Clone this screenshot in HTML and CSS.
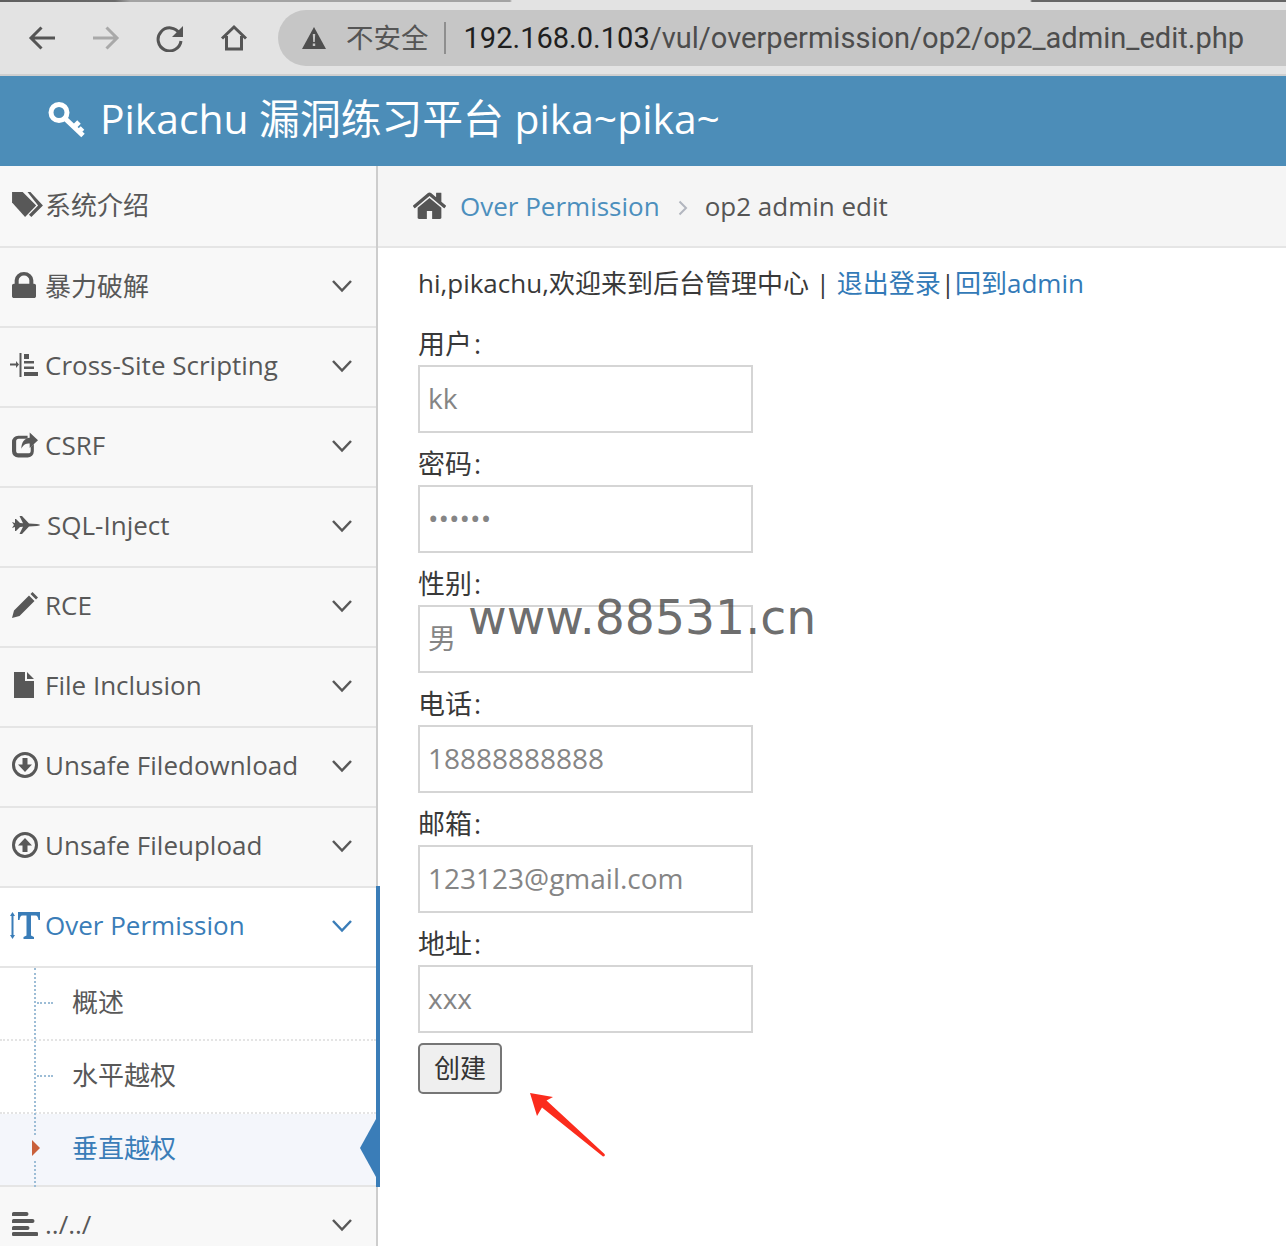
FILE: index.html
```html
<!DOCTYPE html>
<html lang="zh">
<head>
<meta charset="utf-8">
<title>op2 admin edit</title>
<link rel="stylesheet" href="styles.css">
</head>
<body>
<div class="app">
  <div class="tabstrip"></div>
  <div class="toolbar">
    <svg class="tb-ico back" viewBox="0 0 28 28"><path d="M27 14H3M13.500 3.500L3 14l10.500 10.500"/></svg>
    <svg class="tb-ico fwd" viewBox="0 0 28 28"><path d="M1 14h24M14.500 3.500L25 14 14.500 24.500"/></svg>
    <svg class="tb-ico reload" viewBox="0 0 28 28"><path d="M23.500 9.500A11.500 11.500 0 1 0 25 17"/><path class="solid" d="M27 2v11H16z"/></svg>
    <svg class="tb-ico homeb" viewBox="0 0 28 28"><path d="M2 14.500L14 3l12 11.500M6.500 12v13h15V12"/></svg>
    <div class="omnibox">
      <svg class="warn" viewBox="0 0 24 22"><path d="M12 0L24 22H0z"/><path class="warn-mark" d="M10.800 7h2.400l-.4 8h-1.600zM10.800 16.500h2.400v2.500h-2.400z"/></svg>
      <span class="insecure">不安全</span>
      <span class="omni-sep"></span>
      <span class="url"><b class="host">192.168.0.103</b>/vul/overpermission/op2/op2_admin_edit.php</span>
    </div>
  </div>

  <header class="brand">
    <svg class="key" viewBox="0 0 38 36"><circle cx="11" cy="11" r="8"/><path d="M17 17l18 17M26 25.500l5-5M31 30l3.500-3.500"/></svg>
    <span class="brand-text">Pikachu 漏洞练习平台 pika~pika~</span>
  </header>

  <div class="layout">
    <nav class="sidebar">
      <a class="item first">
        <svg class="ico tags" viewBox="0 0 34 28"><path d="M1 1h11l14 14-11.500 12L1 12z"/><path d="M17 1h3l13 14-12 12-2.500-2.500L28 15z"/><circle class="hole" cx="6" cy="6" r="2.200"/></svg>
        <span>系统介绍</span>
      </a>
      <a class="item">
        <svg class="ico lock" viewBox="320 128 1152 1408" preserveAspectRatio="none"><path d="M640 768h512v-192q0-106-75-181t-181-75-181 75-75 181v192zm832 96v576q0 40-28 68t-68 28h-960q-40 0-68-28t-28-68v-576q0-40 28-68t68-28h32v-192q0-184 132-316t316-132 316 132 132 316v192h32q40 0 68 28t28 68z"/></svg>
        <span>暴力破解</span>
        <svg class="chev" viewBox="0 0 20 14"><path d="M1 2l9 9.500L19 2"/></svg>
      </a>
      <a class="item">
        <svg class="ico indent" viewBox="0 0 28 24"><path d="M0 10.500h6V8l3 3.500-3 3.500v-2.500H0zM9.500 0h2v24h-2zM14 1h5v5h-5zM14 8h10v2.500H14zM14 13.500h10V16H14zM14 19h14v4H14z"/></svg>
        <span>Cross-Site Scripting</span>
        <svg class="chev" viewBox="0 0 20 14"><path d="M1 2l9 9.500L19 2"/></svg>
      </a>
      <a class="item">
        <svg class="ico" viewBox="0 0 25 24"><path d="M6 3h9v3H6.500A2.500 2.500 0 0 0 4 8.500v9A2.500 2.500 0 0 0 6.500 20h9a2.500 2.500 0 0 0 2.500-2.500V14l3-3v7a6 6 0 0 1-6 6H6a6 6 0 0 1-6-6V9a6 6 0 0 1 6-6z"/><path d="M17 0l8 7.500-8 7.500v-4.500c-4 0-6 1-8 5 0-6 3-10 8-10.500z"/></svg>
        <span>CSRF</span>
        <svg class="chev" viewBox="0 0 20 14"><path d="M1 2l9 9.500L19 2"/></svg>
      </a>
      <a class="item sql">
        <svg class="ico plane" viewBox="0 0 28 18"><path d="M0 6l3 1V3h1l4 4 3 .3L7.500 0H10l7 7.500 8 .5c2 .3 3 .7 3 1s-1 .7-3 1l-8 .5L10 18H7.500l3.500-7.300-3 .3-4 4H3v-4l-3 1 2-3z"/></svg>
        <span>SQL-Inject</span>
        <svg class="chev" viewBox="0 0 20 14"><path d="M1 2l9 9.500L19 2"/></svg>
      </a>
      <a class="item">
        <svg class="ico" viewBox="0 0 26 26"><path d="M0 26l2-7.500L17 3.500 22.500 9 7.500 24zM18.500 2L20.500 0 26 5.500 24 7.500z"/></svg>
        <span>RCE</span>
        <svg class="chev" viewBox="0 0 20 14"><path d="M1 2l9 9.500L19 2"/></svg>
      </a>
      <a class="item">
        <svg class="ico file" viewBox="0 0 20 26"><path d="M0 0h11v9h9v17H0zM13 0l7 7h-7z"/></svg>
        <span>File Inclusion</span>
        <svg class="chev" viewBox="0 0 20 14"><path d="M1 2l9 9.500L19 2"/></svg>
      </a>
      <a class="item">
        <svg class="ico" viewBox="0 0 26 26"><path fill-rule="evenodd" d="M13 0a13 13 0 1 1 0 26 13 13 0 0 1 0-26zm0 3a10 10 0 1 0 0 20 10 10 0 0 0 0-20z"/><path d="M10.500 6h5v6.500H20L13 20l-7-7.500h4.500z"/></svg>
        <span>Unsafe Filedownload</span>
        <svg class="chev" viewBox="0 0 20 14"><path d="M1 2l9 9.500L19 2"/></svg>
      </a>
      <a class="item">
        <svg class="ico" viewBox="0 0 26 26"><path fill-rule="evenodd" d="M13 0a13 13 0 1 1 0 26 13 13 0 0 1 0-26zm0 3a10 10 0 1 0 0 20 10 10 0 0 0 0-20z"/><path d="M10.500 20h5v-6.500H20L13 6l-7 7.500h4.500z"/></svg>
        <span>Unsafe Fileupload</span>
        <svg class="chev" viewBox="0 0 20 14"><path d="M1 2l9 9.500L19 2"/></svg>
      </a>

      <div class="open-group">
        <a class="item open">
          <svg class="ico textheight" viewBox="0 0 30 27"><path d="M2.500 0L5 4H3.500v19H5l-2.500 4L0 23h1.500V4H0zM8 0h22v8h-1.500c-.5-3-1-4.500-3-4.500H21v20l3 1.500v2H13.500v-2l3-1.500v-20h-4c-2 0-2.500 1.500-3 4.500H8z"/></svg>
          <span>Over Permission</span>
          <svg class="chev" viewBox="0 0 20 14"><path d="M1 2l9 9.500L19 2"/></svg>
        </a>
        <div class="submenu">
          <a class="sub"><span class="tick"></span>概述</a>
          <a class="sub"><span class="tick"></span>水平越权</a>
          <a class="sub current"><span class="marker"></span>垂直越权<span class="notch"></span></a>
        </div>
      </div>

      <a class="item last">
        <svg class="ico" viewBox="0 0 26 24"><path d="M0 1.500A1.500 1.500 0 0 1 1.500 0h13a1.500 1.500 0 0 1 0 4h-13A1.500 1.500 0 0 1 0 1.500zM0 8.500A1.500 1.500 0 0 1 1.500 7h19a1.500 1.500 0 0 1 0 4h-19A1.500 1.500 0 0 1 0 8.500zM0 15.500A1.500 1.500 0 0 1 1.500 14h14a1.500 1.500 0 0 1 0 4h-14A1.500 1.500 0 0 1 0 15.500zM0 22a1.500 1.500 0 0 1 1.500-2h23a1.500 1.500 0 0 1 0 4h-23A1.500 1.500 0 0 1 0 22z"/></svg>
        <span>../../</span>
        <svg class="chev" viewBox="0 0 20 14"><path d="M1 2l9 9.500L19 2"/></svg>
      </a>
    </nav>

    <main class="main">
      <div class="crumbs">
        <svg class="crumb-home" viewBox="0 0 1696 1408"><path transform="translate(-48 -128)" d="M1472 992v480q0 26-19 45t-45 19h-384v-384h-256v384h-384q-26 0-45-19t-19-45v-480q0-1 .5-3t.5-3l575-474 575 474q1 2 1 6zm223-69l-62 74q-8 9-21 11h-3q-13 0-21-7l-692-577-692 577q-12 8-24 7-13-2-21-11l-62-74q-8-10-7-23.500t11-21.500l719-599q32-26 76-26t76 26l244 204v-195q0-14 9-23t23-9h192q14 0 23 9t9 23v408l219 182q10 8 11 21.500t-7 23.500z"/></svg>
        <a class="crumb-link">Over Permission</a>
        <svg class="crumb-sep" viewBox="0 0 10 16"><path d="M1.500 1.500L8 8l-6.500 6.500"/></svg>
        <span class="crumb-now">op2 admin edit</span>
      </div>
      <div class="content">
        <p class="welcome">hi,pikachu,欢迎来到后台管理中心 | <a>退出登录</a><span class="bar">|</span><a>回到admin</a></p>
        <form class="form">
          <label class="lbl">用户<span class="colon">:</span></label>
          <input class="field" type="text" placeholder="kk">
          <label class="lbl">密码<span class="colon">:</span></label>
          <input class="field" type="text" placeholder="••••••">
          <label class="lbl">性别<span class="colon">:</span></label>
          <input class="field" type="text" placeholder="男">
          <label class="lbl">电话<span class="colon">:</span></label>
          <input class="field" type="text" placeholder="18888888888">
          <label class="lbl">邮箱<span class="colon">:</span></label>
          <input class="field" type="text" placeholder="123123@gmail.com">
          <label class="lbl">地址<span class="colon">:</span></label>
          <input class="field" type="text" placeholder="xxx">
          <button class="submit" type="button">创建</button>
        </form>
      </div>
    </main>
  </div>

  <div class="watermark">www.88531.cn</div>
  <svg class="arrow" viewBox="0 0 80 70"><path d="M1 1L24 5 17.500 8.500 75.500 62c.8 1 .3 2.500-1.500 2.500L13 15.500 8 24z"/></svg>
</div>
</body>
</html>
```

FILE: styles.css
```css
* { box-sizing: border-box; }
html, body { margin: 0; padding: 0; background: #fff; }
body { font-family: "Open Sans", "Noto Sans CJK SC", sans-serif; font-size: 26px; color: #393939; }
a { text-decoration: none; cursor: pointer; }

.app { position: relative; width: 1286px; height: 1246px; overflow: hidden; }

.tabstrip { height: 2px; background: linear-gradient(90deg, #5f5f5f 0, #6a6a6a 115px, #a3a3a3 130px, #a3a3a3 510px, #e3e3e3 512px, #e3e3e3 1030px, #666 1032px, #666 100%); }
.toolbar { height: 74px; display: flex; align-items: flex-start; padding: 8px 0 0 28px; background: #e3e3e3; border-bottom: 2px solid #cfcfcf; }
.tb-ico { width: 28px; height: 28px; margin-top: 14px; margin-right: 36px; fill: none; stroke: #555; stroke-width: 3; flex: none; }
.tb-ico.fwd { stroke: #a9a9a9; }
.tb-ico.homeb { margin-right: 30px; }
.tb-ico .solid { fill: #555; stroke: none; }
.omnibox { flex: 1; height: 56px; margin-right: -40px; display: flex; align-items: center; padding-left: 24px; background: #c6c6c6; border-radius: 28px; }
.warn { width: 24px; height: 22px; fill: #4e4e4e; flex: none; }
.warn-mark { fill: #c6c6c6; }
.insecure { margin-left: 20px; padding-bottom: 4px; font-family: "Noto Sans CJK SC", sans-serif; font-size: 27.500px; color: #555; }
.omni-sep { width: 2px; height: 32px; margin: 0 18px 0 15px; background: #8e8e8e; }
.url { font-family: Roboto, sans-serif; font-size: 29.050px; color: #4d4d4d; white-space: nowrap; }
.host { font-weight: 400; color: #1f1f1f; }

.brand { height: 90px; display: flex; align-items: center; gap: 14px; padding-left: 48px; background: #4c8db8; color: #fff; font-size: 40.800px; }
.brand-text { padding-bottom: 10px; }
.key { width: 38px; height: 37px; margin-top: -3px; fill: none; stroke: #fff; stroke-width: 5; flex: none; }

.layout { display: flex; height: 1080px; }

.sidebar { width: 378px; flex: none; background: #f8f8f8; border-right: 2px solid #cdcdcd; color: #585858; }
.item { display: flex; align-items: center; height: 80px; padding: 0 24px 4px 12px; border-bottom: 2px solid #e5e5e5; color: #585858; white-space: nowrap; }
.item.first { height: 82px; }
.ico { width: 26px; height: 26px; margin-right: 7px; fill: #585858; flex: none; }
.ico.lock { width: 24px; margin-right: 9px; }
.ico.tags { width: 33px; height: 27px; margin-left: -1px; margin-right: 1px; }
.ico.indent { width: 28px; margin-left: -2px; }
.ico.plane { width: 28px; height: 18px; margin-right: 7px; }
.ico.file { width: 20px; height: 26px; margin-left: 2px; margin-right: 11px; }
.ico.textheight { width: 30px; height: 27px; margin-left: -2px; margin-right: 5px; fill: #3a7db8; }
.chev { width: 20px; height: 14px; margin-left: auto; margin-top: 2px; fill: none; stroke: #585858; stroke-width: 2.500; flex: none; }

.open-group { position: relative; width: 376px; background: #fff; }
.open-group::after { content: ""; position: absolute; top: -2px; bottom: 0; left: 376px; width: 4px; background: #3a7db8; }
.item.open { background: #fff; color: #3a7db8; }
.item.open .chev { stroke: #3a7db8; }
.submenu { position: relative; background: #fff; }
.submenu::before { content: ""; position: absolute; z-index: 1; top: 0; bottom: 0; left: 34px; border-left: 2px dotted #9dbdd6; }
.sub { position: relative; display: flex; align-items: center; height: 73px; padding: 0 0 5px 72px; color: #585858; border-bottom: 2px dotted #e4e4e4; }
.sub.current { color: #3a7db8; background: #f4f6fb; border-bottom: 2px solid #e5e5e5; }
.tick { position: absolute; left: 37px; top: 34px; width: 16px; border-top: 2px dotted #9dbdd6; }
.marker { position: absolute; z-index: 2; left: 31px; top: 22px; width: 10px; height: 24px; background: #f4f6fb; }
.marker::after { content: ""; position: absolute; left: 1px; top: 4px; width: 8px; height: 16px; background: #c9603a; clip-path: polygon(0 0, 100% 50%, 0 100%); }
.notch { position: absolute; right: 0; top: 5px; width: 16px; height: 58px; background: #3a7db8; clip-path: polygon(100% 0, 0 50%, 100% 100%); }

.main { flex: 1; min-width: 0; }
.crumbs { height: 82px; display: flex; align-items: center; padding-left: 34px; background: #f5f5f5; border-bottom: 2px solid #e5e5e5; }
.crumb-home { width: 35px; height: 29px; margin-right: 13px; margin-top: -4px; fill: #555; flex: none; }
.crumb-link { color: #4c8fbd; }
.crumb-sep { width: 10px; height: 16px; margin: 3px 17px 0 18px; fill: none; stroke: #b2b6bf; stroke-width: 2; flex: none; }
.crumb-now { color: #555; }

.content { padding: 17px 0 0 40px; }
.welcome { margin: 0 0 12px; line-height: 36px; white-space: nowrap; }
.welcome a { color: #337ab7; }
.form { display: flex; flex-direction: column; align-items: flex-start; }
.lbl { height: 36px; font-size: 27px; line-height: 34px; margin: 14px 0 2px; color: #393939; }
.colon { margin-left: 2px; }
.field { width: 335px; height: 68px; padding: 0 8px 2px; border: 2px solid #d5d5d5; border-radius: 0; background: #fff; font-family: "Open Sans", "Noto Sans CJK SC", sans-serif; font-size: 28px; color: #858585; outline: none; }
.field::placeholder { color: #858585; opacity: 1; }
.submit { width: 84px; height: 51px; margin-top: 10px; padding: 0 0 4px; border: 2px solid #767676; border-radius: 5px; background: #efefef; font-family: "Noto Sans CJK SC", sans-serif; font-size: 26px; color: #333; }

.watermark { position: absolute; left: 468px; top: 591px; font-family: "DejaVu Sans", sans-serif; font-size: 47.300px; line-height: 54px; color: rgba(70, 70, 70, .8); white-space: nowrap; }
.arrow { position: absolute; left: 529px; top: 1092px; width: 80px; height: 70px; fill: #fb2c1d; }
```
